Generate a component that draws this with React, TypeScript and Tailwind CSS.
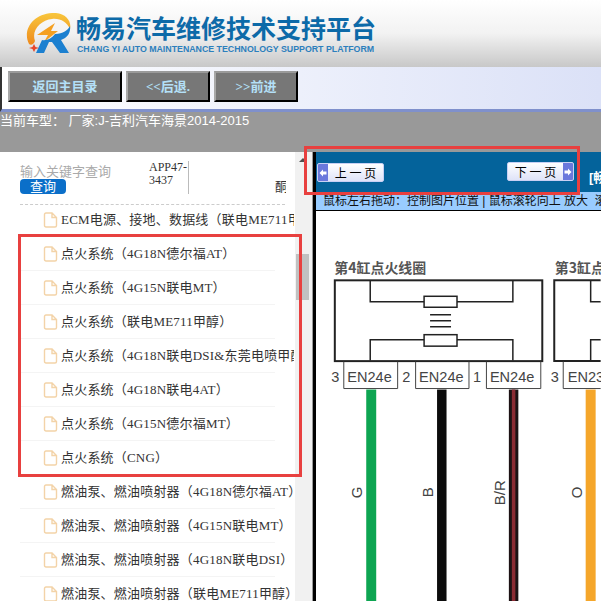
const serifCjk = { fontFamily: '"Liberation Serif", "Noto Sans CJK SC", serif' };

const rows = [
  'ECM电源、接地、数据线（联电ME711甲醇）',
  '点火系统（4G18N德尔福AT）',
  '点火系统（4G15N联电MT）',
  '点火系统（联电ME711甲醇）',
  '点火系统（4G18N联电DSI&东莞电喷甲醇）',
  '点火系统（4G18N联电4AT）',
  '点火系统（4G15N德尔福MT）',
  '点火系统（CNG）',
  '燃油泵、燃油喷射器（4G18N德尔福AT）',
  '燃油泵、燃油喷射器（4G15N联电MT）',
  '燃油泵、燃油喷射器（4G18N联电DSI）',
  '燃油泵、燃油喷射器（联电ME711甲醇）',
];

function FileIcon() {
  return (
    <svg width="15" height="16" viewBox="0 0 15 16" className="shrink-0">
      <path d="M1.5 2.5 Q1.5 1 3 1 H9 L13.5 5.5 V13.5 Q13.5 15 12 15 H3 Q1.5 15 1.5 13.5 Z M9 1 V5.5 H13.5" fill="#fff" stroke="#f3d3a8" strokeWidth="1.4" />
    </svg>
  );
}

function Logo() {
  return (
    <svg width="46" height="41" viewBox="0 0 46 41" className="shrink-0">
      <defs>
        <linearGradient id="ring" x1="0" y1="0" x2="0" y2="1">
          <stop offset="0" stopColor="#f8c63c" />
          <stop offset="1" stopColor="#ee8a1c" />
        </linearGradient>
      </defs>
      <path d="M4 31 C-3 17 8 1 27 0 C40 -1 47 8 45 16 C42 9 35 5 27 6 C16 7 6 17 10 28 C9 31 6 33 4 31 Z" fill="url(#ring)" />
      <path d="M12 22 L30 10 L26 18 L33 18 L19 29 L23 22 Z" fill="#f5a020" />
      <path d="M30 21 C38 21 43 17 45 13 C46 20 42 25 36 27 L44 40 H35 L27 29 H24 L19 40 H11 L17 27 C22 28 27 25 30 21 Z" fill="#1c80d0" />
      <path d="M9 31 L10.5 34 L14 35 L10.5 36 L9 39 L7.5 36 L4 35 L7.5 34 Z" fill="#e8452a" />
    </svg>
  );
}

function NavButton({ label, width }: { label: string; width: string }) {
  return (
    <button
      className={`${width} h-[31px] bg-[#777777] border-2 border-t-[#9a9a9a] border-l-[#a8a8a8] border-r-black border-b-black text-[13px] font-bold text-[#b4e0f8]`}
      style={serifCjk}
    >
      {label}
    </button>
  );
}

function PageButton({ label, dir }: { label: string; dir: 'left' | 'right' }) {
  const arrow = (
    <span className="w-[10px] h-full bg-[#6a78dc] flex items-center justify-center shrink-0">
      <svg width="8" height="8" viewBox="0 0 8 8">
        <path d={dir === 'left' ? 'M0.5 4 L4 0.5 V2.5 H7.5 V5.5 H4 V7.5 Z' : 'M7.5 4 L4 0.5 V2.5 H0.5 V5.5 H4 V7.5 Z'} fill="#fff" />
      </svg>
    </span>
  );
  return (
    <div className="w-[67px] h-[19px] flex items-center rounded-[2px] border border-[#c8d0f4] bg-gradient-to-b from-white to-[#dfe3f8] overflow-hidden">
      {dir === 'left' && arrow}
      <span className="flex-1 text-center text-[12px] text-black" style={{ fontFamily: '"Noto Sans CJK SC", sans-serif' }}>{label}</span>
      {dir === 'right' && arrow}
    </div>
  );
}

function Diagram() {
  const text = { fontFamily: '"Liberation Sans", sans-serif', fill: '#444' };
  const cjk = { fontFamily: '"Noto Sans CJK SC", sans-serif', fill: '#555' };
  return (
    <svg width="285" height="391" viewBox="316 210 285 391" className="block">
      <text x="334" y="272" fontSize="14" fontWeight="700" style={cjk}>第4缸点火线圈</text>
      <text x="555" y="272" fontSize="14" fontWeight="700" style={cjk}>第3缸点</text>

      <g fill="none" stroke="#222" strokeWidth="1.5">
        <rect x="334.5" y="279.5" width="208" height="81" strokeWidth="2" />
        <path d="M370 280 V301 H424 M457 301 H513 V280 M370 360 V339 H424 M457 339 H513 V360" />
        <rect x="424" y="295.5" width="33" height="11" />
        <rect x="424" y="334" width="33" height="11.5" />
        <path d="M430 314 H451 M430 320 H451 M430 326 H451" />
        <path d="M601 279.5 H554.5 V360.5 H601" strokeWidth="2" />
        <path d="M601 301 H591 V280 M601 339 H591 V360" />
      </g>

      <g fill="none" stroke="#444" strokeWidth="1">
        <path d="M343.5 361 V388 H397.5 V361 M415.5 361 V388 H469 V361 M486.5 361 V388 H541 V361 M563.5 361 V388 H601" />
      </g>
      <g fontSize="14.6" style={text}>
        <text x="331" y="381">3</text>
        <text x="402" y="381">2</text>
        <text x="473" y="381">1</text>
        <text x="551" y="381">3</text>
        <text x="347" y="381">EN24e</text>
        <text x="419" y="381">EN24e</text>
        <text x="490" y="381">EN24e</text>
        <text x="568" y="381">EN23</text>
      </g>

      <rect x="366" y="389" width="10" height="212" fill="#0ea552" />
      <rect x="437" y="389" width="9.5" height="212" fill="#0c0c0c" />
      <rect x="509" y="389" width="9.5" height="212" fill="#1c1214" />
      <rect x="512" y="389" width="3.5" height="212" fill="#8a2b33" />
      <rect x="586" y="389" width="10" height="212" fill="#f5a62a" />

      <g fontSize="15" style={text}>
        <text transform="translate(362 498) rotate(-90)">G</text>
        <text transform="translate(433 497) rotate(-90)">B</text>
        <text transform="translate(505 505) rotate(-90)">B/R</text>
        <text transform="translate(582 498) rotate(-90)">O</text>
      </g>
    </svg>
  );
}

export default function App() {
  return (
    <div className="relative w-[601px] h-[601px] overflow-hidden bg-white flex flex-col" style={{ fontFamily: '"Liberation Sans", "Noto Sans CJK SC", sans-serif' }}>
      {/* header */}
      <div className="h-[67px] shrink-0 bg-gradient-to-b from-white via-[#f2f2f2] to-[#c8c8c8] flex items-start pl-[25px] pt-[13px] gap-[5px]">
        <Logo />
        <div className="flex flex-col pt-[1px]">
          <span className="text-[25px] leading-[26px] font-bold text-[#0d6aa8] whitespace-nowrap" style={{ fontFamily: '"Noto Sans CJK SC", sans-serif' }}>
            畅易汽车维修技术支持平台
          </span>
          <span className="text-[8.8px] leading-[12px] mt-[3px] ml-[1px] font-bold text-[#2c7fbd] whitespace-nowrap">
            CHANG YI AUTO MAINTENANCE TECHNOLOGY SUPPORT PLATFORM
          </span>
        </div>
      </div>

      {/* toolbar */}
      <div className="h-[45px] shrink-0 bg-gradient-to-r from-white to-[#dbe1f7] border-l-2 border-l-[#333] border-b-[3px] border-b-[#7f90cc] flex items-start pt-[4px] pl-[6px] gap-[4px]">
        <NavButton label="返回主目录" width="w-[114px]" />
        <NavButton label="<<后退." width="w-[84px]" />
        <NavButton label=">>前进" width="w-[84px]" />
      </div>

      {/* current car */}
      <div className="h-[40px] shrink-0 bg-[#999999] text-white text-[13px] leading-[17px] whitespace-nowrap">
        当前车型： 厂家:J-吉利汽车海景2014-2015
      </div>

      <div className="flex flex-1 min-h-0">
        {/* left tree */}
        <div className="w-[295px] shrink-0 overflow-hidden">
          <div className="relative h-[53px] ml-[20px] mr-[10px] border-b border-dashed border-[#cccccc]">
            <div className="absolute left-0 top-[12px] text-[13px] leading-[16px] text-[#aaaaaa] whitespace-nowrap">输入关键字查询</div>
            <div className="absolute left-0 top-[27px] w-[46px] h-[15px] rounded-[4px] bg-[#0b6fc9] text-white text-[13px] leading-[15px] text-center">查询</div>
            <div className="absolute left-[129px] top-[9px] w-[40px] h-[33px] border-r border-[#bbbbbb] text-[12px] leading-[13px] text-[#333]" style={serifCjk}>APP47-3437</div>
            <div className="absolute right-[-1px] top-[27px] w-[11px] overflow-hidden text-[13px] leading-[16px] text-[#333]">酮</div>
          </div>
          <div className="-mt-[2px]">
            {rows.map(row => (
              <div key={row} className="h-[34px] ml-[20px] mr-[20px] border-b border-[#f4f4f4] flex items-center">
                <div className="flex items-center gap-[3px] pl-[23px] w-[274px] shrink-0 overflow-hidden whitespace-nowrap text-[13px] tracking-[0.2px] text-[#333]" style={serifCjk}>
                  <FileIcon />
                  <span>{row}</span>
                </div>
              </div>
            ))}
          </div>
        </div>

        {/* scrollbar */}
        <div className="relative w-[15px] shrink-0 bg-[#f1f1f1]">
          <div className="absolute left-[4px] top-[6px] w-0 h-0 border-x-[4px] border-x-transparent border-b-[4px] border-b-[#505050]" />
          <div className="absolute left-[1px] top-[102px] w-[13px] h-[46px] bg-[#c1c1c1]" />
        </div>

        <div className="w-[3px] shrink-0 bg-[#f1f1f1] border-r border-[#999]" />

        {/* right pane */}
        <div className="flex-1 min-w-0 border-l-[3px] border-black flex flex-col overflow-hidden">
          <div className="relative h-[40px] shrink-0 bg-[#04639b]">
            <div className="absolute left-[1px] top-[11px]"><PageButton label="上 一 页" dir="left" /></div>
            <div className="absolute left-[191px] top-[10px]"><PageButton label="下 一 页" dir="right" /></div>
            <div className="absolute left-[273px] top-[17px] text-[13px] leading-[18px] font-bold text-white whitespace-nowrap">[畅</div>
          </div>
          <div className="h-[19px] shrink-0 bg-[#99ccff] border-b border-black pl-[7px] text-[12px] leading-[18px] text-[#111] whitespace-nowrap">
            鼠标左右拖动：控制图片位置 | 鼠标滚轮向上 放大&nbsp;&nbsp;滚
          </div>
          <Diagram />
        </div>
      </div>

      {/* red annotation frames */}
      <div className="absolute left-[18px] top-[234px] w-[284px] h-[243px] border-[3px] border-[#e8403f]" />
      <div className="absolute left-[304px] top-[146px] w-[276px] h-[49px] border-[3px] border-[#e8403f]" />
    </div>
  );
}
